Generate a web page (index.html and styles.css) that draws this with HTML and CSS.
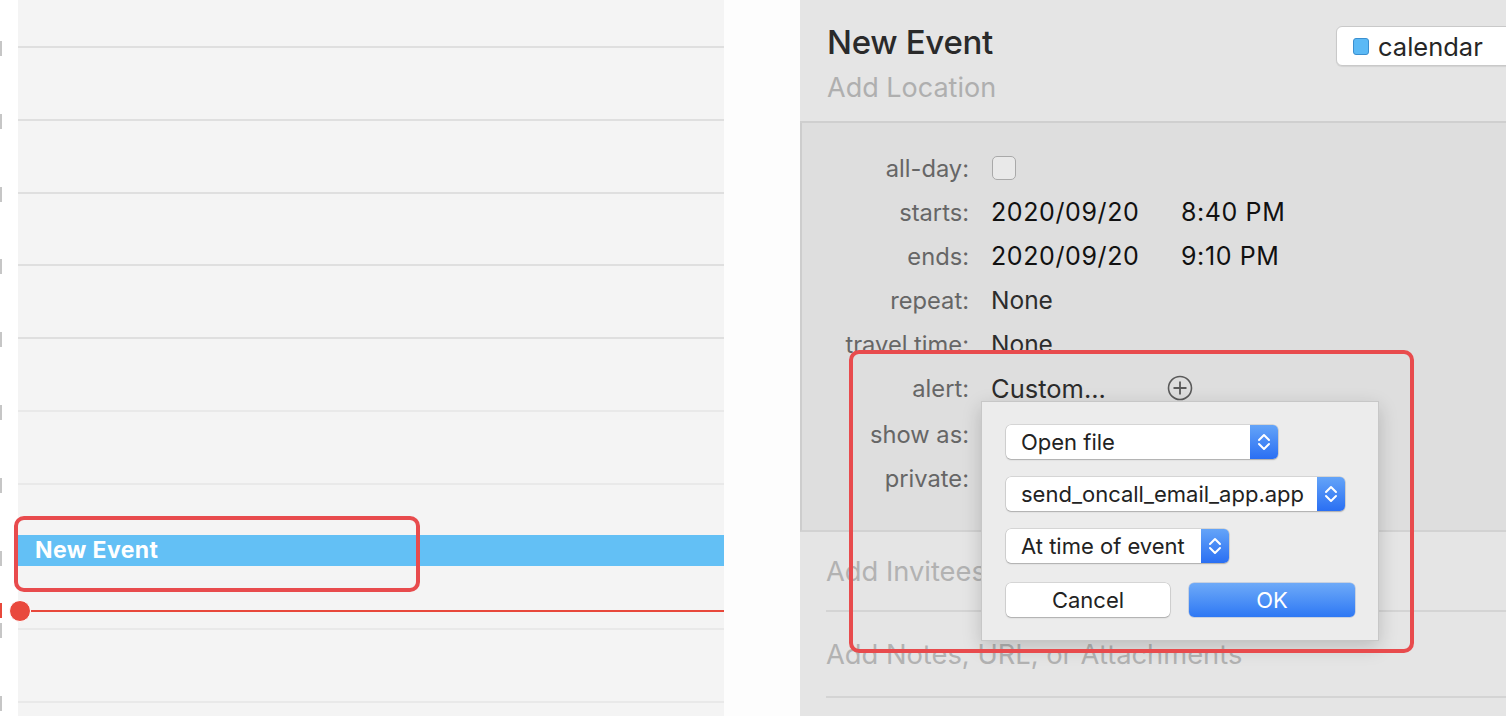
FILE: index.html
```html
<!DOCTYPE html>
<html lang="en">
<head>
<meta charset="utf-8">
<title>New Event</title>
<link rel="stylesheet" href="styles.css">
</head>
<body>
<div class="page">
  <section class="cal">
    <div class="row row-first"><div class="g"></div><div class="c"></div></div>
    <div class="row"><div class="g"></div><div class="c"></div></div>
    <div class="row"><div class="g"></div><div class="c"></div></div>
    <div class="row"><div class="g"></div><div class="c"></div></div>
    <div class="row"><div class="g"></div><div class="c"></div></div>
    <div class="row light"><div class="g"></div><div class="c"></div></div>
    <div class="row light"><div class="g"></div><div class="c"></div></div>
    <div class="row light"><div class="g"></div><div class="c"></div></div>
    <div class="row light"><div class="g"></div><div class="c"></div></div>
    <div class="row light"><div class="g"></div><div class="c"></div></div>
    <div class="row light"><div class="g"></div><div class="c"></div></div>

    <div class="event">New Event</div>
    <div class="now"><span class="now-tick"></span><span class="now-dot"></span><span class="now-line"></span></div>
    <div class="mark mark-event"></div>
  </section>

  <div class="spacer"></div>

  <section class="panel">
    <header class="head">
      <div class="titles">
        <h1 class="title">New Event</h1>
        <div class="loc">Add Location</div>
      </div>
      <div class="chip"><span class="sq"></span>calendar</div>
    </header>

    <div class="details">
      <div class="field"><span class="lbl">all-day:</span><span class="val"><span class="check"></span></span></div>
      <div class="field"><span class="lbl">starts:</span><span class="val strong"><span class="date">2020/09/20</span><span>8:40 PM</span></span></div>
      <div class="field"><span class="lbl">ends:</span><span class="val strong"><span class="date">2020/09/20</span><span>9:10 PM</span></span></div>
      <div class="field"><span class="lbl">repeat:</span><span class="val">None</span></div>
      <div class="field"><span class="lbl">travel time:</span><span class="val">None</span></div>
      <div class="field"><span class="lbl">alert:</span><span class="val custom"><span class="date">Custom...</span>
        <svg class="plus" width="26" height="26" viewBox="0 0 26 26"><circle cx="13" cy="13" r="11.5" fill="none" stroke="#5a5a5a" stroke-width="1.6"/><path d="M13 6.5V19.5M6.5 13H19.5" stroke="#5a5a5a" stroke-width="1.8"/></svg></span></div>
      <div class="field"><span class="lbl">show as:</span><span class="val"></span></div>
      <div class="field"><span class="lbl">private:</span><span class="val"></span></div>
    </div>

    <div class="extra extra-1">Add Invitees</div>
    <div class="extra extra-2">Add Notes, URL, or Attachments</div>

    <div class="popover">
      <div class="popup w1"><span class="ptext">Open file</span><span class="step"><svg width="28" height="34" viewBox="0 0 28 34"><path d="M9 15L14 10L19 15M9 19L14 24L19 19" fill="none" stroke="#fff" stroke-width="2" stroke-linecap="round" stroke-linejoin="round"/></svg></span></div>
      <div class="popup w2"><span class="ptext">send_oncall_email_app.app</span><span class="step"><svg width="28" height="34" viewBox="0 0 28 34"><path d="M9 15L14 10L19 15M9 19L14 24L19 19" fill="none" stroke="#fff" stroke-width="2" stroke-linecap="round" stroke-linejoin="round"/></svg></span></div>
      <div class="popup w3"><span class="ptext">At time of event</span><span class="step"><svg width="28" height="34" viewBox="0 0 28 34"><path d="M9 15L14 10L19 15M9 19L14 24L19 19" fill="none" stroke="#fff" stroke-width="2" stroke-linecap="round" stroke-linejoin="round"/></svg></span></div>
      <div class="buttons">
        <button class="btn cancel">Cancel</button>
        <button class="btn ok">OK</button>
      </div>
    </div>

    <div class="mark mark-alert"></div>
  </section>
</div>
</body>
</html>
```

FILE: styles.css
```css
* { box-sizing: border-box; }
html, body { margin: 0; padding: 0; }
body {
  width: 1506px;
  height: 716px;
  overflow: hidden;
  background: #ffffff;
  font-family: "Inter", "Roboto", "Liberation Sans", sans-serif;
}
.page {
  display: flex;
  width: 1506px;
  height: 716px;
}

/* ---------- calendar ---------- */
.cal {
  position: relative;
  width: 724px;
  height: 716px;
  display: flex;
  flex-direction: column;
  overflow: hidden;
}
.row {
  display: flex;
  height: 72.8px;
  flex: none;
}
.row-first { height: 48px; }
.g {
  position: relative;
  width: 18px;
  background: #ffffff;
}
.g::after {
  content: "";
  position: absolute;
  z-index: 1;
  left: 0;
  bottom: -8px;
  width: 2px;
  height: 15px;
  background: #c6c6c6;
}
.c {
  flex: 1;
  background: #f4f4f4;
  border-bottom: 2px solid #dfdfdf;
}
.row.light .c { border-bottom-color: #e9e9e9; }

.event {
  position: absolute;
  left: 18px;
  top: 535px;
  width: 706px;
  height: 31px;
  background: #63c0f5;
  color: #ffffff;
  font-weight: 700;
  font-size: 23px;
  letter-spacing: 0.4px;
  line-height: 31px;
  padding-left: 17px;
}
.now {
  position: absolute;
  z-index: 2;
  left: 0;
  top: 600px;
  width: 724px;
  height: 22px;
}
.now-tick {
  position: absolute;
  left: 0;
  top: 3px;
  width: 2px;
  height: 15px;
  background: #e8483b;
}
.now-dot {
  position: absolute;
  left: 9px;
  top: 0;
  width: 22px;
  height: 22px;
  border-radius: 50%;
  background: #e9493d;
  border: 1.5px solid #ffffff;
}
.now-line {
  position: absolute;
  left: 31px;
  right: 0;
  top: 10px;
  height: 2px;
  background: #e8483b;
}

.mark {
  position: absolute;
  border: 4px solid #e84b4d;
  border-radius: 10px;
  pointer-events: none;
  z-index: 5;
}
.mark-event {
  left: 14px;
  top: 516px;
  width: 406px;
  height: 76px;
}

.spacer {
  width: 76px;
  background: #fdfdfd;
}

/* ---------- event panel ---------- */
.panel {
  position: relative;
  width: 706px;
  height: 716px;
  background: #e5e5e5;
  overflow: hidden;
  display: flex;
  flex-direction: column;
}
.head {
  display: flex;
  height: 123px;
  padding-left: 27px;
  border-bottom: 2px solid #cfcfcf;
  flex: none;
}
.titles { flex: 1; }
.title {
  margin: 21px 0 0;
  font-size: 33px;
  font-weight: 500;
  line-height: 42px;
  color: #2a2a2a;
  letter-spacing: -0.3px;
}
.loc {
  margin-top: 9px;
  font-size: 27px;
  line-height: 32px;
  color: #afafaf;
}
.chip {
  display: flex;
  align-items: center;
  gap: 9px;
  margin-top: 26px;
  width: 180px;
  height: 40px;
  margin-right: -10px;
  padding-left: 16px;
  background: #ffffff;
  border: 1px solid #c9c9c9;
  border-radius: 6px;
  font-size: 25.5px;
  color: #262626;
  box-shadow: 0 1px 1px rgba(0,0,0,0.08);
}
.sq {
  width: 16px;
  height: 17px;
  border-radius: 3px;
  background: #5bb9f5;
  border: 1px solid #3b8fcf;
}

.details {
  flex: none;
  height: 409px;
  padding-top: 23px;
  background: #dedede;
  border-left: 2px solid #cdcdcd;
  border-bottom: 2px solid #d2d2d2;
}
.field {
  display: flex;
  align-items: center;
  height: 44px;
}
.field:nth-child(7) { margin-top: 2px; }
.lbl {
  width: 167px;
  text-align: right;
  font-size: 23.7px;
  color: #666666;
  white-space: nowrap;
}
.val {
  display: flex;
  align-items: center;
  margin-left: 22px;
  font-size: 24.5px;
  color: #2c2c2c;
}
.val.strong {
  color: #111111;
  font-size: 25px;
  letter-spacing: 0.6px;
}
.val.custom { font-size: 25.5px; }
.date {
  display: inline-block;
  width: 190px;
}
.check {
  display: inline-block;
  width: 24px;
  height: 24px;
  margin-left: 1px;
  border: 1px solid #a9a9a9;
  border-radius: 5px;
  background: #e9e9e9;
}
.plus { margin-left: -14px; }

.extra {
  flex: none;
  display: flex;
  align-items: center;
  margin-left: 26px;
  font-size: 27.3px;
  color: #b2b2b2;
  border-bottom: 2px solid #d4d4d4;
}
.extra-1 { height: 80px; }
.extra-2 { height: 86px; }

/* ---------- popover ---------- */
.popover {
  position: absolute;
  left: 181px;
  top: 401px;
  width: 398px;
  height: 240px;
  background: #ececec;
  border: 1px solid #c7c7c7;
  box-shadow: 0 6px 18px rgba(0,0,0,0.18);
  padding: 23px 0 0 24px;
  display: flex;
  flex-direction: column;
  gap: 18px;
  z-index: 3;
}
.popup {
  display: flex;
  align-items: center;
  height: 34px;
  background: #ffffff;
  border-radius: 5px;
  box-shadow: 0 0 0 0.5px rgba(0,0,0,0.18), 0 1px 1.5px rgba(0,0,0,0.2);
  overflow: hidden;
}
.w1 { width: 272px; }
.w2 { width: 339px; }
.w3 { width: 223px; }
.ptext {
  flex: 1;
  padding-left: 15px;
  font-size: 22px;
  color: #222222;
  white-space: nowrap;
}
.step {
  display: flex;
  width: 28px;
  height: 34px;
  background: linear-gradient(#64a4f8, #2a6ff3);
}
.buttons {
  display: flex;
  gap: 19px;
  margin-top: 2px;
}
.btn {
  height: 34px;
  border: none;
  border-radius: 5px;
  font-family: inherit;
  font-size: 22px;
  padding: 0;
}
.cancel {
  width: 164px;
  background: #ffffff;
  color: #222222;
  box-shadow: 0 0 0 0.5px rgba(0,0,0,0.18), 0 1px 1.5px rgba(0,0,0,0.2);
}
.ok {
  width: 166px;
  background: linear-gradient(#6eaaf8, #2e78f4);
  color: #ffffff;
  box-shadow: 0 0 0 0.5px rgba(0,60,160,0.3);
}

.mark-alert {
  left: 49px;
  top: 350px;
  width: 565px;
  height: 303px;
}
```
